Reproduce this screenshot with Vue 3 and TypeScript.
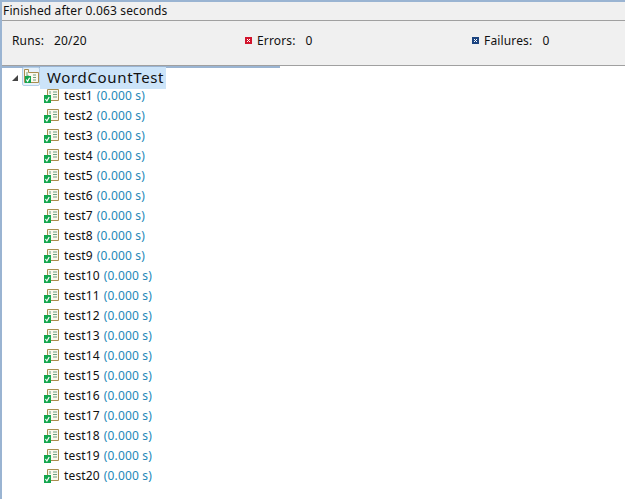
<script setup lang="ts">
const tests = Array.from({ length: 20 }, (_, i) => `test${i + 1}`)
</script>

<template>
  <div class="view">
    <div class="finished">Finished after 0.063 seconds</div>
    <div class="stats">
      <div class="stat runs"><span>Runs:</span><span class="val">20/20</span></div>
      <div class="stat errors">
        <svg class="mark" width="7" height="7" viewBox="0 0 7 7"><rect width="7" height="7" fill="#d2142c" /><path d="M2 2l3 3M5 2l-3 3" stroke="#fff" stroke-width="1" /></svg>
        <span>Errors:</span><span class="val">0</span>
      </div>
      <div class="stat failures">
        <svg class="mark" width="7" height="7" viewBox="0 0 7 7"><rect width="7" height="7" fill="#1c4480" /><path d="M2 2l3 3M5 2l-3 3" stroke="#fff" stroke-width="1" /></svg>
        <span>Failures:</span><span class="val">0</span>
      </div>
    </div>
    <div class="accent"></div>
    <div class="tree">
      <div class="root">
        <svg class="twisty" width="8" height="8" viewBox="0 0 8 8"><path d="M7 1v6H1z" fill="#444" /></svg>
        <div class="root-icon">
          <svg width="15" height="15" viewBox="0 0 15 15">
            <path d="M.5 .5h4v3h10v10H.5z" fill="#fbf8ec" stroke="#a88d4f" />
            <path d="M3 3v4h2M9 6h3M9 8.500h3M9 11h3" stroke="#6f9f83" fill="none" />
            <rect x="1" y="7" width="6" height="7" fill="#14a64e" />
            <path d="M2.300 10.500l1.300 1.800 2-3.500" stroke="#fff" stroke-width="1.200" fill="none" />
          </svg>
        </div>
        <div class="root-label">WordCountTest</div>
      </div>
      <div v-for="t in tests" :key="t" class="row">
        <svg class="icon" width="15" height="14" viewBox="0 0 15 14">
          <path d="M3.500 .5h11v11h-11z" fill="#fbf8ec" stroke="#a88d4f" />
          <path d="M6 2v3M9 3h4M9 5.500h4M9 8h4" stroke="#6f9f83" fill="none" />
          <rect x="0" y="6" width="7" height="8" fill="#14a64e" />
          <path d="M1.400 10l1.500 2 2.300-4" stroke="#fff" stroke-width="1.200" fill="none" />
        </svg>
        <span class="name">{{ t }}</span>
        <span class="time">(0.000 s)</span>
      </div>
    </div>
  </div>
</template>

<style>
html, body { margin: 0; background: #fff; }
</style>

<style scoped>
.view {
  width: 625px;
  height: 499px;
  box-sizing: border-box;
  overflow: hidden;
  border-top: 2px solid #9ab4d2;
  border-left: 2px solid #9ab4d2;
  font-family: "Noto Sans", sans-serif;
  font-size: 12px;
  color: #111;
  letter-spacing: 0.15px;
  background: #fff;
}
.finished {
  height: 18px;
  line-height: 17px;
  padding-left: 1px;
  background: #f0f0f0;
  border-bottom: 1px solid #a0a0a0;
  white-space: nowrap;
}
.stats {
  height: 44px;
  box-sizing: content-box;
  background: #f0f0f0;
  border-bottom: 1px solid #a0a0a0;
  display: grid;
  grid-template-columns: 233px 227px 1fr;
  align-items: start;
  padding-left: 10px;
}
.stat { display: flex; align-items: center; height: 38px; }
.val { margin-left: 10px; }
.mark { margin-right: 5px; }
.accent { width: 278px; height: 2px; background: #9ab4d2; margin-bottom: -2px; }
.tree { padding-top: 1px; }
.root { display: flex; align-items: flex-start; height: 18px; }
.twisty { margin-left: 9px; margin-right: 3px; margin-top: 7px; }
.root-icon {
  width: 18px;
  height: 19px;
  display: flex;
  align-items: center;
  justify-content: center;
  border: 1px solid #b4cfe8;
  border-radius: 2px;
  box-sizing: border-box;
  background: #e6f1fb;
}
.root-label {
  background: #cce4f9;
  font-size: 15px;
  height: 22px;
  line-height: 21px;
  padding: 0 2px 0 7px;
  letter-spacing: 0.65px;
}
.row { display: flex; align-items: center; height: 20px; padding-left: 42px; white-space: nowrap; }
.icon { margin-right: 5px; margin-top: 1px; }
.time { color: #2488b8; margin-left: 4px; }
</style>
